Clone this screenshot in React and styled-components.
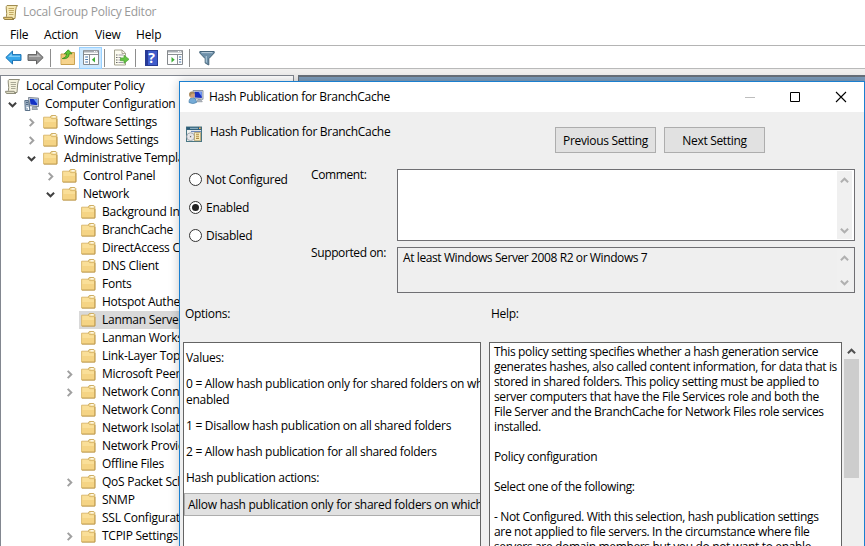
import React from 'react';
import styled, { createGlobalStyle, css } from 'styled-components';

const GlobalStyle = createGlobalStyle`
  * { box-sizing: border-box; }
  html, body { margin: 0; padding: 0; overflow: hidden; background: #fff; }
`;

const Window = styled.div`
  position: relative;
  display: flex;
  flex-direction: column;
  width: 865px;
  height: 546px;
  overflow: hidden;
  background: #fff;
  color: #000;
  font: 12px/18px "Open Sans", "Noto Sans", sans-serif;
  letter-spacing: -0.29px;
  white-space: nowrap;
`;

const TitleBar = styled.header`
  display: flex;
  align-items: center;
  gap: 4px;
  height: 24px;
  padding-left: 2px;
  color: #999;
  letter-spacing: -0.25px;
`;

const MenuBar = styled.nav`
  display: flex;
  align-items: center;
  height: 21px;
  padding-left: 10px;
  letter-spacing: -0.15px;
`;

const MenuItem = styled.span`
  width: ${(p) => p.$width}px;
`;

const Toolbar = styled.div`
  display: flex;
  align-items: center;
  height: 24px;
  padding: 1px 0 0 5px;
  border-top: 1px solid #b4b4b4;
  border-bottom: 1px solid #b9b9b9;
`;

const ToolButton = styled.span`
  display: flex;
  align-items: center;
  justify-content: center;
  width: 23px;
  height: 22px;
  margin-left: ${(p) => p.$offset || 0}px;
  ${(p) => p.$active && css`
    background: #cce8ff;
    border: 1px solid #99d1ff;
  `}
`;

const Separator = styled.i`
  width: 1px;
  height: 18px;
  margin: 0 ${(p) => p.$after}px 0 ${(p) => p.$before}px;
  background: #8d8d8d;
`;

const Panes = styled.main`
  display: flex;
  flex: 1;
  gap: 4px;
  padding-top: 6px;
  background: #f0efee;
`;

const Tree = styled.div`
  width: 294px;
  padding-top: 1px;
  letter-spacing: -0.26px;
  background: #fff;
  border: 1px solid #828790;
  border-width: 1px 1px 0;
`;

const TreeRow = styled.div`
  display: flex;
  height: 18px;
  padding-left: ${(p) => p.$level * 19 - 17}px;
`;

const RootRow = styled(TreeRow)`
  padding-left: 1px;
`;

const ChevronSlot = styled.span`
  display: flex;
  align-items: center;
  justify-content: center;
  width: 19px;
  padding-right: 1px;
`;

const TreeItem = styled.span`
  display: flex;
  flex: 1;
  align-items: center;
  gap: 5px;
  padding-left: 2px;
  background: ${(p) => (p.$selected ? '#d9d9d9' : 'transparent')};
`;

const DetailPane = styled.div`
  flex: 1;
  background: #7c9cbc;
  border-top: 2px solid #69717b;
  border-left: 1px solid #69717b;
`;

const Dialog = styled.section`
  position: absolute;
  left: 179px;
  top: 81px;
  display: flex;
  flex-direction: column;
  width: 686px;
  height: 500px;
  background: #efefef;
  border: 1px solid #1a7fd0;
  box-shadow: 0 0 10px rgba(0, 0, 0, 0.22);
`;

const DialogTitle = styled.header`
  display: flex;
  align-items: center;
  gap: 5px;
  height: 30px;
  padding: 0 17px 0 8px;
  background: #fff;
`;

const Spacer = styled.span`
  flex: 1;
`;

const Controls = styled.span`
  display: flex;
  align-items: center;
  gap: 34px;
`;

const Heading = styled.div`
  display: flex;
  height: 57px;
  padding: 11px 99px 0 6px;
`;

const HeadingText = styled.span`
  flex: 1;
  padding-left: 8px;
  letter-spacing: -0.31px;
`;

const HeadingIcon = styled.span`
  display: flex;
  padding-top: 3px;
`;

const Buttons = styled.div`
  display: flex;
  gap: 8px;
  padding-top: 4px;
`;

const Button = styled.button`
  width: 101px;
  height: 26px;
  padding: 1px 0 0;
  color: #000;
  font: inherit;
  letter-spacing: -0.32px;
  background: #e1e1e1;
  border: 1px solid #adadad;
`;

const Form = styled.div`
  display: grid;
  grid-template-columns: 122px 86px 458px;
  height: 124px;
  padding-left: 9px;
`;

const Radios = styled.div`
  display: flex;
  flex-direction: column;
  gap: 10px;
  padding-top: 2px;
`;

const RadioLabel = styled.label`
  display: flex;
  align-items: center;
  gap: 4px;
  height: 18px;
`;

const Dot = styled.span`
  display: flex;
  align-items: center;
  justify-content: center;
  width: 13px;
  height: 13px;
  margin-bottom: 1px;
  background: #fff;
  border: 1px solid #333;
  border-radius: 50%;
  ${(p) => p.$checked && css`
    &::after {
      content: "";
      width: 7px;
      height: 7px;
      background: #222;
      border-radius: 50%;
    }
  `}
`;

const Labels = styled.div`
  display: flex;
  flex-direction: column;
  gap: 60px;
  margin-top: -3px;
  letter-spacing: -0.38px;
`;

const Fields = styled.div`
  display: flex;
  flex-direction: column;
  gap: 6px;
`;

const Field = styled.div`
  display: flex;
  justify-content: space-between;
  height: ${(p) => p.$height}px;
  padding: 1px 2px 1px 5px;
  line-height: 17px;
  letter-spacing: -0.4px;
  background: ${(p) => p.$fill};
  border: 1px solid #6f6f73;
`;

const FieldScroll = styled.span`
  display: flex;
  flex-direction: column;
  align-items: center;
  justify-content: space-between;
  width: 15px;
  padding: 5px 0 4px;
  background: #f0f0f0;
`;

const Captions = styled.div`
  display: flex;
  height: 49px;
  padding: 12px 0 0 5px;
`;

const Caption = styled.span`
  width: 306px;
`;

const Lower = styled.div`
  display: flex;
  flex: 1;
  min-height: 0;
  padding-left: 3px;
`;

const Options = styled.div`
  width: 298px;
  margin-right: 8px;
  overflow: hidden;
  background: #fff;
  border: 1px solid #646464;
`;

const OptionText = styled.p`
  margin: 0 0 10px 2px;
  line-height: 16px;
  &:first-child { margin-top: 7px; }
`;

const Combo = styled.div`
  width: 420px;
  height: 23px;
  margin-top: -3px;
  padding-left: 3px;
  line-height: 21px;
  letter-spacing: -0.27px;
  background: #e1e1e1;
  border: 1px solid #adadad;
`;

const Help = styled.div`
  width: 353px;
  padding: 1px 0 0 4px;
  line-height: 15px;
  letter-spacing: -0.348px;
  white-space: pre;
  background: #fff;
  border: 1px solid #646464;
`;

const ScrollBar = styled.div`
  display: flex;
  flex-direction: column;
  align-items: center;
  gap: 3px;
  width: 17px;
  padding: 5px 0 0 1px;
`;

const Thumb = styled.span`
  width: 15px;
  height: 119px;
  background: #cdcdcd;
`;

const Chevron = ({ dir, color = '#555', size = 9 }) => {
  const d = {
    right: 'M3 1 L7 5 L3 9',
    down: 'M1 3 L5 7 L9 3',
    up: 'M1 7 L5 3 L9 7',
  }[dir];
  return (
    <svg width={size} height={size} viewBox="0 0 10 10" fill="none" stroke={color} strokeWidth="2.2">
      <path d={d} />
    </svg>
  );
};

const ScrollIcon = ({ muted }) => (
  <svg width="17" height="17" viewBox="0 0 17 17" strokeLinejoin="round">
    <path d="M5 1.5H15.5Q14 3 13.7 6L13 14.5H3Q5 13 4.7 9.5L4.2 4Q4 2 5 1.5Z" fill={muted ? '#f4f1dc' : '#f7e9b4'} stroke={muted ? '#8f8e7b' : '#a08c50'} />
    <path d="M1.5 13.3H10.2Q10.5 15.5 12 15.5H3Q1.5 15.5 1.5 13.3Z" fill={muted ? '#dedcc6' : '#e6ca78'} stroke={muted ? '#8f8e7b' : '#967f42'} />
    <path d="M6.5 4.5H12M6.7 6.5H12M7 8.5H11.7M7 10.5H11.5" stroke={muted ? '#a09f8c' : '#bba35e'} strokeWidth="0.9" />
  </svg>
);

const Folder = () => (
  <svg width="16" height="16" viewBox="0 0 16 16">
    <path d="M7 3.5L8.3 1.5H12.8L13.8 2.5V13.5H7Z" fill="#f2d993" stroke="#c8a759" strokeWidth="0.9" />
    <path d="M9.5 2.8H12.6" stroke="#fff" strokeWidth="1.2" />
    <path d="M0.6 3.2H7.3L8.6 4.6H13.8V14H0.6Z" fill="#fadf98" stroke="#d8b569" strokeWidth="0.9" />
    <path d="M1.2 8H13.4V13.7H1.2Z" fill="#f2cd78" opacity="0.6" />
    <path d="M1 14.1H13.9V5" fill="none" stroke="#b9934a" strokeWidth="0.8" />
  </svg>
);

const ComputerConfig = () => (
  <svg width="16" height="16" viewBox="0 0 16 16">
    <path d="M4.5 1.5L14.5 2.2V10.7L5.5 9.6Z" fill="#d7dce3" stroke="#7b8490" />
    <path d="M5.8 2.8L13.3 3.3V9.3L6.5 8.5Z" fill="#1331c4" />
    <path d="M9.5 3L13.3 3.3V8Z" fill="#6fa0f4" />
    <path d="M8.5 10.7L12.5 11L13.5 13.5H8Z" fill="#a9b3bd" stroke="#78838e" strokeWidth="0.7" />
    <path d="M0.8 4.5H4.5L6 14.5H1.3Z" fill="#aebed0" stroke="#5b7188" />
    <path d="M2 6.3H4M2 8.3H4.3" stroke="#3c5874" />
    <path d="M2.5 11.5H4.5V14" stroke="#fff" fill="none" />
  </svg>
);

const UserComputer = () => (
  <svg width="16" height="16" viewBox="0 0 16 16">
    <path d="M5 1.5H15V10.3L6 9.7Z" fill="#d9dde3" stroke="#8c96a3" />
    <path d="M6.3 2.8H13.8V8.9L6.8 8.5Z" fill="#172fc0" />
    <path d="M10.3 2.8H13.8V7.5Z" fill="#789ff1" />
    <path d="M10 10.5H12.7L14.3 12.8H8.5Z" fill="#adb4bc" stroke="#818a94" strokeWidth="0.6" />
    <path d="M1 13.5Q1 8.7 4.5 8.7T8.5 13.5Q5 15.7 1 13.5Z" fill="#75abd7" stroke="#457ca8" strokeWidth="0.7" />
    <circle cx="4" cy="5.9" r="2.8" fill="#d1a178" />
    <path d="M1.2 6Q0.8 2.5 3.9 2.5T6.9 5Q4.5 4 3.5 5L2 7.5Z" fill="#a58a5c" />
  </svg>
);

const PolicyIcon = () => (
  <svg width="16" height="17" viewBox="0 0 16 17">
    <path d="M0 0.5H16V16H0Z" fill="#487684" />
    <path d="M1 4H15V15H1Z" fill="#edf0ef" />
    <path d="M0.5 1H15.5V3.8H0.5Z" fill="#2d5d79" />
    <path d="M4 2.3H12" stroke="#9fc0cf" />
    <path d="M13 2.3H14.7" stroke="#efb05c" strokeWidth="1.5" />
    <path d="M5 5.5H15" stroke="#6b87b8" strokeWidth="1.2" />
    <circle cx="4.6" cy="10.7" r="3.9" fill="#e6e6e9" stroke="#969da3" strokeWidth="0.8" />
    <circle cx="4.6" cy="10.7" r="1.1" fill="#555" stroke="#fff" strokeWidth="0.8" />
    <path d="M8.5 6.5H14.5V14.7H8.5Z" fill="#f8edbd" stroke="#a5915d" strokeWidth="0.7" />
    <path d="M10 8.3H13M10 10.3H13M10 12.4H13" stroke="#b08c45" strokeWidth="1.1" />
  </svg>
);

const Arrow = ({ back }) => (
  <svg width="17" height="15" viewBox="0 0 17 15">
    <path
      d={back ? 'M0.8 7.5L7.5 1V4.6H16V10.4H7.5V14Z' : 'M16.2 7.5L9.5 1V4.6H1V10.4H9.5V14Z'}
      fill={back ? '#35a6ea' : '#929292'}
      stroke={back ? '#1c72b3' : '#606060'}
      strokeLinejoin="round"
    />
    <path d={back ? 'M3 7L6.8 3.4V5.7H15V7Z' : 'M14 7L10.2 3.4V5.7H2V7Z'} fill={back ? '#7dcaf6' : '#bcbcbc'} />
  </svg>
);

const FolderUp = () => (
  <svg width="16" height="17" viewBox="0 0 16 17">
    <path d="M1 5H7L8.5 3.5H14.5V15.5H1Z" fill="#f0c979" stroke="#c39843" strokeWidth="0.9" />
    <path d="M1.5 9H14V15H1.5Z" fill="#f6d38c" />
    <path d="M2.3 9.6Q6.5 9 6.8 4.8H4.3L8.3 0.8L12 4.8H9.2Q9 10.5 2.3 9.6Z" fill="#61c735" stroke="#31871c" strokeWidth="0.8" />
  </svg>
);

const PanelIcon = ({ flip }) => (
  <svg width="16" height="15" viewBox="0 0 16 15">
    <path d="M0.5 0.5H15.5V14.5H0.5Z" fill="#fdfdfd" stroke="#85898d" />
    <path d="M1 1.5H15" stroke="#a8adb3" strokeWidth="2" />
    <path d="M11 1.5H14.3" stroke="#fff" strokeDasharray="1 0.7" />
    <path d="M1 4.5H15" stroke="#8a8e93" />
    <path d={flip ? 'M10.5 5V14' : 'M6.5 5V14'} stroke="#8a8e93" />
    <path d={flip ? 'M12 7H14.2M12 9.5H14.2M12 12H14.2' : 'M2.2 7H5M2.2 9.5H5M2.2 12H5'} stroke="#4a79ae" strokeWidth="1.2" />
    <path d={flip ? 'M4.5 6.9L7.7 9.7L4.5 12.5Z' : 'M12 6.9L8.8 9.7L12 12.5Z'} fill="#3cae33" />
  </svg>
);

const ExportIcon = () => (
  <svg width="17" height="17" viewBox="0 0 17 17">
    <path d="M1.5 1H9L12.5 4.2V16H1.5Z" fill="#fdfcf0" stroke="#9a9885" strokeWidth="0.9" />
    <path d="M9 1V4.5H12.5" fill="none" stroke="#9a9885" strokeWidth="0.8" />
    <path d="M3 6H4.5M3 8.5H4.5M3 11H4.5M3 13.5H4.5" stroke="#666" strokeWidth="1.2" />
    <path d="M5.5 6H10.5M5.5 8.5H8M5.5 11H8M5.5 13.5H10.5" stroke="#9d99a8" />
    <path d="M7.5 8.9H11V6.2L16 10.3L11 14.4V11.7H7.5Z" fill="#63c443" stroke="#4ea238" strokeWidth="0.7" />
  </svg>
);

const HelpGlyph = styled.b`
  width: 13px;
  height: 16px;
  color: #fff;
  font-size: 14px;
  line-height: 14px;
  text-align: center;
  background: linear-gradient(90deg, #26399a 2px, #3f5ccb 2px);
  border: 1px solid #273a91;
`;

const FilterIcon = () => (
  <svg width="16" height="16" viewBox="0 0 16 16">
    <path d="M0.8 1.5H15.2V3L9.8 8.7V15L6.2 13V8.7L0.8 3Z" fill="#6e90a9" stroke="#45647a" strokeLinejoin="round" />
    <path d="M2.5 2.6H13.5" stroke="#b6cbd9" strokeWidth="1.1" />
    <path d="M7.3 6V12.5" stroke="#abc6d7" strokeWidth="1.2" />
  </svg>
);

const tree = [
  [1, 'Computer Configuration', 'down'],
  [2, 'Software Settings', 'right'],
  [2, 'Windows Settings', 'right'],
  [2, 'Administrative Templa', 'down'],
  [3, 'Control Panel', 'right'],
  [3, 'Network', 'down'],
  [4, 'Background In'],
  [4, 'BranchCache'],
  [4, 'DirectAccess C'],
  [4, 'DNS Client'],
  [4, 'Fonts'],
  [4, 'Hotspot Authe'],
  [4, 'Lanman Server'],
  [4, 'Lanman Works'],
  [4, 'Link-Layer Top'],
  [4, 'Microsoft Peer', 'right'],
  [4, 'Network Conn', 'right'],
  [4, 'Network Conn'],
  [4, 'Network Isolat'],
  [4, 'Network Provid'],
  [4, 'Offline Files'],
  [4, 'QoS Packet Sch', 'right'],
  [4, 'SNMP'],
  [4, 'SSL Configurat'],
  [4, 'TCPIP Settings', 'right'],
];

const helpText = `This policy setting specifies whether a hash generation service
generates hashes, also called content information, for data that is
stored in shared folders. This policy setting must be applied to
server computers that have the File Services role and both the
File Server and the BranchCache for Network Files role services
installed.

Policy configuration

Select one of the following:

- Not Configured. With this selection, hash publication settings
are not applied to file servers. In the circumstance where file
servers are domain members but you do not want to enable`;

const FieldBar = () => (
  <FieldScroll>
    <Chevron dir="up" color="#b0b0b0" />
    <Chevron dir="down" color="#b0b0b0" />
  </FieldScroll>
);

export default function App() {
  return (
    <Window>
      <GlobalStyle />
      <TitleBar><ScrollIcon />Local Group Policy Editor</TitleBar>
      <MenuBar>
        <MenuItem $width={34}>File</MenuItem>
        <MenuItem $width={51}>Action</MenuItem>
        <MenuItem $width={41}>View</MenuItem>
        <MenuItem $width={40}>Help</MenuItem>
      </MenuBar>
      <Toolbar>
        <Arrow back />
        <ToolButton $offset={2}><Arrow /></ToolButton>
        <Separator $before={3} $after={5} />
        <ToolButton><FolderUp /></ToolButton>
        <ToolButton $active><PanelIcon /></ToolButton>
        <Separator $before={2} $after={5} />
        <ToolButton><ExportIcon /></ToolButton>
        <Separator $before={2} $after={4} />
        <ToolButton><HelpGlyph>?</HelpGlyph></ToolButton>
        <ToolButton><PanelIcon flip /></ToolButton>
        <Separator $before={3} $after={5} />
        <ToolButton><FilterIcon /></ToolButton>
      </Toolbar>
      <Panes>
        <Tree>
          <RootRow>
            <TreeItem><ScrollIcon muted />Local Computer Policy</TreeItem>
          </RootRow>
          {tree.map(([level, name, state], index) => (
            <TreeRow key={index} $level={level}>
              <ChevronSlot>
                {state && <Chevron dir={state} size={9} color={state === 'down' ? '#404040' : '#a0a0a0'} />}
              </ChevronSlot>
              <TreeItem $selected={name === 'Lanman Server'}>
                {level === 1 ? <ComputerConfig /> : <Folder />}
                {name}
              </TreeItem>
            </TreeRow>
          ))}
        </Tree>
        <DetailPane />
      </Panes>

      <Dialog>
        <DialogTitle>
          <UserComputer />
          Hash Publication for BranchCache
          <Spacer />
          <Controls>
            <svg width="10" height="12" viewBox="0 0 10 12"><path d="M0 6.5H10" stroke="#bdbdbd" /></svg>
            <svg width="12" height="12" viewBox="0 0 12 12"><path d="M1.5 1.5H10.5V10.5H1.5Z" fill="none" stroke="#000" /></svg>
            <svg width="12" height="12" viewBox="0 0 12 12"><path d="M1 1L11 11M11 1L1 11" stroke="#000" strokeWidth="1.1" /></svg>
          </Controls>
        </DialogTitle>
        <Heading>
          <HeadingIcon><PolicyIcon /></HeadingIcon>
          <HeadingText>Hash Publication for BranchCache</HeadingText>
          <Buttons>
            <Button>Previous Setting</Button>
            <Button>Next Setting</Button>
          </Buttons>
        </Heading>
        <Form>
          <Radios>
            <RadioLabel><Dot />Not Configured</RadioLabel>
            <RadioLabel><Dot $checked />Enabled</RadioLabel>
            <RadioLabel><Dot />Disabled</RadioLabel>
          </Radios>
          <Labels>
            <span>Comment:</span>
            <span>Supported on:</span>
          </Labels>
          <Fields>
            <Field $height={72} $fill="#fff"><span /><FieldBar /></Field>
            <Field $height={46} $fill="#efefef">
              <span>At least Windows Server 2008 R2 or Windows 7</span><FieldBar />
            </Field>
          </Fields>
        </Form>
        <Captions>
          <Caption>Options:</Caption>
          <Caption>Help:</Caption>
        </Captions>
        <Lower>
          <Options>
            <OptionText>Values:</OptionText>
            <OptionText>0 = Allow hash publication only for shared folders on wh<br />enabled</OptionText>
            <OptionText>1 = Disallow hash publication on all shared folders</OptionText>
            <OptionText>2 = Allow hash publication for all shared folders</OptionText>
            <OptionText>Hash publication actions:</OptionText>
            <Combo>Allow hash publication only for shared folders on which</Combo>
          </Options>
          <Help>{helpText}</Help>
          <ScrollBar>
            <Chevron dir="up" color="#505050" />
            <Thumb />
          </ScrollBar>
        </Lower>
      </Dialog>
    </Window>
  );
}
